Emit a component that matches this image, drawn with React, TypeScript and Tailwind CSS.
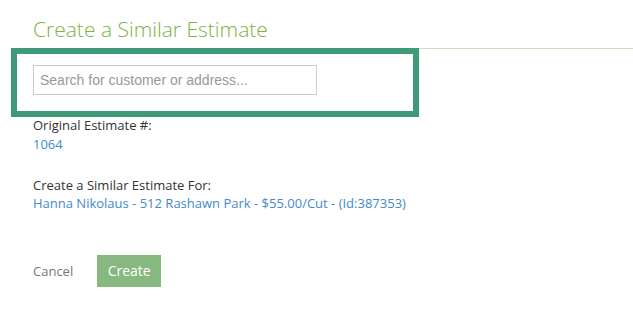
import React, { useState } from 'react'

export default function App() {
  const [query, setQuery] = useState('')

  return (
    <div className="min-h-[324px] w-[633px] bg-white" style={{ fontFamily: '"Open Sans", sans-serif' }}>
      {/* Header */}
      <div className="h-[48px] pl-[33px] pt-[18px]">
        <h2 className="text-[21px] font-light leading-[22px] text-[#7cb342]">Create a Similar Estimate</h2>
      </div>

      {/* Search box with highlight + header rule */}
      <div className="flex">
        <div className="ml-[11px] w-[408px] border-[6px] border-[#3f9a78] pl-[16px] pt-[11px] pb-[16px]">
          <input
            type="text"
            value={query}
            onChange={(e) => setQuery(e.target.value)}
            placeholder="Search for customer or address..."
            className="h-[30px] w-[284px] border border-[#cccccc] px-[6px] text-[14px] text-[#555] outline-none placeholder:text-[#999]"
            style={{ fontFamily: '"Liberation Sans", Arial, sans-serif' }}
          />
        </div>
        <div className="flex-1 border-t border-[#c8dfc0]" />
      </div>

      {/* Details */}
      <div className="-mt-px pl-[33px] text-[13px] leading-[18.5px]">
        <div className="text-[#333]">Original Estimate #:</div>
        <div className="text-[#428bca]">1064</div>

        <div className="mt-[22.5px] text-[#333]">Create a Similar Estimate For:</div>
        <div className="text-[#428bca]">Hanna Nikolaus - 512 Rashawn Park - $55.00/Cut - (Id:387353)</div>
      </div>

      {/* Actions */}
      <div className="mt-[42px] flex items-center pl-[33px]">
        <button className="text-[13px] leading-[18px] text-[#777]">Cancel</button>
        <button className="ml-[24px] h-[32px] w-[64px] bg-[#86b87f] text-[14px] text-white">Create</button>
      </div>
    </div>
  )
}
